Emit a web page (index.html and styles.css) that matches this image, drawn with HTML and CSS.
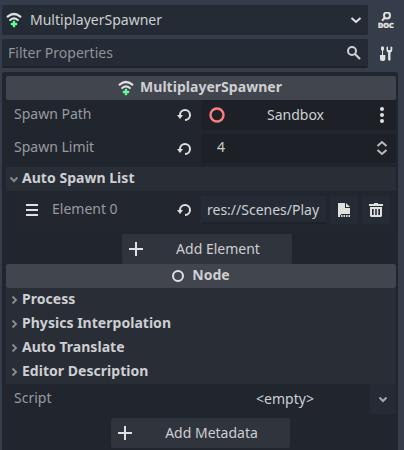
FILE: index.html
```html
<!DOCTYPE html>
<html lang="en">
<head>
    <meta charset="UTF-8">
    <meta name="viewport" content="width=device-width, initial-scale=1.0">
    <title>Inspector</title>
    <link rel="stylesheet" href="styles.css">
</head>
<body>
    <!-- Shared icons -->
    <svg class="defs" width="0" height="0">
        <symbol id="spawner" viewBox="0 0 16 16">
            <path d="M1.7 4.7Q8-.7 14.3 4.7M4.2 8Q8 4.7 11.8 8" fill="none" stroke="#e0e0e0" stroke-width="2.2" stroke-linecap="round"/>
            <path d="M7 9h2v2h2v2H9v2H7v-2H5v-2h2z" fill="#5fff97" stroke="#5fff97" stroke-width="0.4"/>
        </symbol>
        <symbol id="revert" viewBox="0 0 16 16">
            <path d="M4 9V8a5 5 0 1 1 5 5" fill="none" stroke="#e0e0e0" stroke-width="2"/>
            <path d="M1 8h6l-3 4z" fill="#e0e0e0"/>
        </symbol>
        <symbol id="plus" viewBox="0 0 16 16">
            <path d="M8 1v14M1 8h14" fill="none" stroke="#e0e0e0" stroke-width="2"/>
        </symbol>
        <symbol id="down" viewBox="0 0 12 12">
            <path d="M2.5 4.5L6 8l3.5-3.5" fill="none" stroke="currentColor" stroke-width="2"/>
        </symbol>
        <symbol id="right" viewBox="0 0 12 12">
            <path d="M4.5 2.5L8 6 4.5 9.5" fill="none" stroke="currentColor" stroke-width="2"/>
        </symbol>
    </svg>

    <header class="top">
        <div class="bar node-select">
            <svg class="icon"><use href="#spawner"/></svg>
            <span>MultiplayerSpawner</span>
            <svg class="icon end" viewBox="0 0 16 16"><path d="M3.5 6L8 10l4.5-4" fill="none" stroke="#e0e0e0" stroke-width="2"/></svg>
        </div>
        <svg class="icon tool" viewBox="0 0 16 16">
            <circle cx="9" cy="3.5" r="3" fill="none" stroke="#e0e0e0" stroke-width="2"/>
            <path d="M7 5.5L4 8.700" stroke="#e0e0e0" stroke-width="2"/>
            <text class="doc" x="0" y="15.5" textLength="15.5" lengthAdjust="spacingAndGlyphs">DOC</text>
        </svg>
        <div class="bar filter">
            <span>Filter Properties</span>
            <svg class="icon end" viewBox="0 0 16 16"><circle cx="7" cy="6" r="4" fill="none" stroke="#cdcfd1" stroke-width="2"/><path d="M10 9l5 5" stroke="#cdcfd1" stroke-width="2.2"/></svg>
        </div>
        <svg class="icon tool" viewBox="0 0 16 16">
            <path d="M3 1.5L3.5.5h2l.5 1v2L5 5v4h2.300v4q0 2-2 2H4q-2 0-2-2V9h2V5L3 3.500z" fill="#e0e0e0"/>
            <path d="M8.500 1l1.500-.5V4h2.500V.5L14.300 1v3q0 1.700-1.800 2.700V14q-1.200 1.500-2.400 0V6.700Q8.500 5.700 8.500 4z" fill="#e0e0e0"/>
        </svg>
    </header>

    <main class="inspector">
        <div class="category">
            <svg class="icon"><use href="#spawner"/></svg>
            <span>MultiplayerSpawner</span>
        </div>

        <div class="row path">
            <span class="label">Spawn Path</span>
            <svg class="icon revert"><use href="#revert"/></svg>
            <div class="field">
                <svg class="icon" viewBox="0 0 16 16"><circle cx="8" cy="8" r="6.5" fill="none" stroke="#fc7f7f" stroke-width="2.4"/></svg>
                <span class="value">Sandbox</span>
                <svg class="icon" viewBox="0 0 16 16"><g fill="#e0e0e0"><circle cx="8" cy="2" r="2"/><circle cx="8" cy="8" r="2"/><circle cx="8" cy="14" r="2"/></g></svg>
            </div>
        </div>

        <div class="row limit">
            <span class="label">Spawn Limit</span>
            <svg class="icon revert"><use href="#revert"/></svg>
            <div class="field">
                <span class="number">4</span>
                <svg class="icon" viewBox="0 0 16 16"><path d="M3.5 6L8 2l4.5 4M3.5 10L8 14l4.5-4" fill="none" stroke="#b9bbbd" stroke-width="2"/></svg>
            </div>
        </div>

        <div class="section list-head">
            <svg class="arrow"><use href="#down"/></svg>
            <span>Auto Spawn List</span>
        </div>
        <div class="element">
            <svg class="icon" viewBox="0 0 16 16"><path d="M2 3h12M2 8h12M2 13h12" stroke="#e0e0e0" stroke-width="2"/></svg>
            <span class="label">Element 0</span>
            <svg class="icon revert"><use href="#revert"/></svg>
            <div class="res"><span>res://Scenes/Play</span></div>
            <div class="square load">
                <svg class="icon" viewBox="0 0 16 16"><path d="M2 1h7v5h5v6H5v1H4v2H2zM10 1l4 4h-4zM5 13h1.500v2H5zM7.500 13H9v2H7.500zM10 13h1.500v2H10zM12.500 13H14v2h-1.500z" fill="#e0e0e0"/></svg>
            </div>
            <div class="square">
                <svg class="icon" viewBox="0 0 16 16"><path d="M6 1h4v1h5v2H1V2h5zM2 5h12v9l-1 1H3l-1-1zM4 7v6h1.700V7zM7.200 7v6h1.600V7zM10.300 7v6H12V7z" fill="#e0e0e0" fill-rule="evenodd"/></svg>
            </div>
        </div>
        <div class="button add-element">
            <svg class="icon"><use href="#plus"/></svg>
            <span>Add Element</span>
        </div>

        <div class="category">
            <svg class="icon" viewBox="0 0 16 16"><circle cx="8" cy="8" r="5" fill="none" stroke="#e0e0e0" stroke-width="2"/></svg>
            <span>Node</span>
        </div>
        <div class="section"><svg class="arrow"><use href="#right"/></svg><span>Process</span></div>
        <div class="section"><svg class="arrow"><use href="#right"/></svg><span>Physics Interpolation</span></div>
        <div class="section"><svg class="arrow"><use href="#right"/></svg><span>Auto Translate</span></div>
        <div class="section"><svg class="arrow"><use href="#right"/></svg><span>Editor Description</span></div>

        <div class="script">
            <span class="label">Script</span>
            <span class="value">&lt;empty&gt;</span>
            <div class="drop"><svg class="arrow"><use href="#down"/></svg></div>
        </div>
        <div class="button add-metadata">
            <svg class="icon"><use href="#plus"/></svg>
            <span>Add Metadata</span>
        </div>
    </main>
</body>
</html>
```
FILE: styles.css
```css
* {
    box-sizing: border-box;
}

body {
    margin: 0;
    height: 450px;
    overflow: hidden;
    background-color: #363d4a;
    color: #cdcfd2;
    font-family: "Noto Sans", sans-serif;
    font-size: 14px;
    line-height: 20px;
}

svg {
    display: block;
    flex: none;
}

.defs {
    position: absolute;
}

.icon {
    width: 16px;
    height: 16px;
}

.arrow {
    width: 12px;
    height: 12px;
    color: #85888d;
}

.top {
    display: grid;
    grid-template-columns: 366px 16px;
    grid-template-rows: 30px 29px;
    gap: 4px 10px;
    padding: 5px 0 4px 2px;
    align-items: center;
}

.bar {
    display: flex;
    align-items: center;
    height: 100%;
    background-color: #252b34;
    border-radius: 2px;
}

.node-select {
    padding: 0 4px;
    gap: 8px;
}

.filter {
    padding: 0 7px 0 6px;
    color: #909398;
    border-bottom: 2px solid #1e2228;
}

.end {
    margin-left: auto;
}

.doc {
    fill: #e0e0e0;
    stroke: #e0e0e0;
    stroke-width: 0.5px;
    font-size: 7.5px;
    font-weight: 800;
}

.inspector {
    margin: 0 6px 0 2px;
    padding: 4px 2px 0 4px;
    width: 396px;
    height: 378px;
    background-color: #21252e;
    border-radius: 2px 2px 0 0;
}

.category {
    display: flex;
    align-items: center;
    justify-content: center;
    gap: 6px;
    height: 24px;
    padding-right: 2px;
    background-color: #41454d;
    border-radius: 2px;
    font-weight: bold;
    letter-spacing: 0.03px;
}

.category span,
.section span,
.label {
    padding-bottom: 2px;
}

.row {
    display: flex;
    align-items: center;
    padding-left: 8px;
    height: 30px;
}

.label {
    color: #989b9f;
}

.row .label {
    width: 162px;
}

.field {
    display: flex;
    align-items: center;
    width: 195px;
    height: 100%;
    margin-left: 9px;
    padding: 0 6px 0 8px;
    background-color: #1d2127;
    border-radius: 2px;
}

.value {
    flex: 1;
    text-align: center;
}

.field .value {
    padding-right: 8px;
}

.limit {
    margin: 4px 0;
    height: 29px;
}

.limit .label {
    padding-bottom: 4px;
}

.limit .field {
    padding-bottom: 2px;
}

.number {
    flex: 1;
    padding: 0 0 2px 8px;
}

.section {
    display: flex;
    align-items: center;
    gap: 2px;
    height: 24px;
    padding-left: 2px;
    background-color: #292d36;
    font-weight: bold;
    letter-spacing: 0.03px;
}

.element {
    display: flex;
    align-items: center;
    height: 39px;
    margin-left: 12px;
    padding: 0 6px 1px;
    background-color: #22262f;
}

.element .label {
    width: 124px;
    margin-left: 12px;
}

.res {
    width: 125px;
    height: 28px;
    margin-left: 9px;
    padding: 4px 6px;
    background-color: #252b34;
    border-bottom: 2px solid #1e2228;
    white-space: nowrap;
}

.square {
    display: grid;
    place-items: center;
    width: 28px;
    height: 28px;
    margin-left: 4px;
    background-color: #252b34;
    border-radius: 2px;
}

.button {
    display: flex;
    align-items: center;
    height: 30px;
    padding: 0 0 0 6px;
    background-color: #30343d;
    border-radius: 2px;
}

.button span {
    flex: 1;
    text-align: center;
}

.add-element {
    width: 170px;
    margin: 4px 0 0 116px;
}

.add-metadata {
    width: 179px;
    margin: 4px 0 0 105px;
}

.script {
    display: flex;
    align-items: center;
    height: 30px;
    padding-left: 8px;
}

.script .label {
    width: 162px;
}

.script .value {
    padding-left: 24px;
}

.drop {
    display: grid;
    place-items: center;
    width: 26px;
    height: 30px;
    background-color: #252b34;
    border-radius: 2px;
}

.drop .arrow {
    color: #a5a8ab;
}
```
